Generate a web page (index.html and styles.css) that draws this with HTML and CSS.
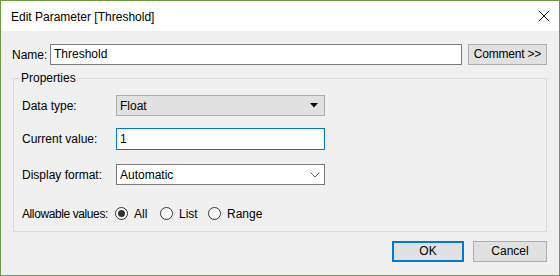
FILE: index.html
```html
<!DOCTYPE html>
<html>
<head>
<meta charset="utf-8">
<link rel="stylesheet" href="styles.css">
</head>
<body>
<div class="window">
  <div class="titlebar">
    <span class="title">Edit Parameter [Threshold]</span>
    <svg class="close" width="12" height="12" viewBox="0 0 12 12"><path d="M1 1 L11 11 M11 1 L1 11" stroke="#111" stroke-width="1" fill="none"/></svg>
  </div>
  <div class="content">
    <div class="name-row">
      <span class="name-label">Name:</span>
      <div class="textbox name-input">Threshold</div>
      <div class="btn comment">Comment &gt;&gt;</div>
    </div>
    <div class="group">
      <span class="legend">Properties</span>
      <div class="row row-type">
        <span class="lbl">Data type:</span>
        <div class="dropdown">
          <span>Float</span>
          <svg class="tri" width="8" height="5" viewBox="0 0 8 5"><path d="M0 0 H8 L4 4.5 Z" fill="#000"/></svg>
        </div>
      </div>
      <div class="row row-value">
        <span class="lbl">Current value:</span>
        <div class="textbox focus">1</div>
      </div>
      <div class="row row-format">
        <span class="lbl">Display format:</span>
        <div class="combo">
          <span>Automatic</span>
          <svg class="chev" width="10" height="6" viewBox="0 0 10 6"><path d="M0.5 0.5 L5 5 L9.5 0.5" stroke="#606060" stroke-width="1" fill="none"/></svg>
        </div>
      </div>
      <div class="row row-allow">
        <span class="lbl lbl-tight">Allowable values:</span>
        <div class="radios">
          <span class="opt opt-all"><span class="radio checked"></span><span class="rtext">All</span></span>
          <span class="opt opt-list"><span class="radio"></span><span class="rtext">List</span></span>
          <span class="opt"><span class="radio"></span><span class="rtext">Range</span></span>
        </div>
      </div>
    </div>
    <div class="footer">
      <div class="btn ok">OK</div>
      <div class="btn cancel">Cancel</div>
    </div>
  </div>
</div>
</body>
</html>
```
FILE: styles.css
```css
* { box-sizing: border-box; }
html, body { margin: 0; padding: 0; }
body {
  font-family: "Liberation Sans", Arial, sans-serif;
  font-size: 12px;
  color: #000;
  background: #f0f0f0;
}
.window {
  width: 560px;
  height: 276px;
  border: 1px solid #6f9a3f;
  background: #f0f0f0;
  display: flex;
  flex-direction: column;
  white-space: nowrap;
}
.titlebar {
  height: 30px;
  background: #fff;
  display: flex;
  align-items: center;
  justify-content: space-between;
  padding: 0 9px 0 10px;
  flex: none;
}
.title {
  font-size: 12px;
  line-height: 16px;
  margin-top: 1px;
}
.close { display: block; margin-top: -1px; }
.content {
  padding: 13px 12px 0 12px;
  display: flex;
  flex-direction: column;
}
.name-row {
  display: flex;
  align-items: center;
  height: 21px;
}
.name-label {
  flex: 0 0 38px;
  margin-left: -1px;
  line-height: 16px;
}
.textbox {
  height: 21px;
  border: 1px solid #7a7a7a;
  background: #fff;
  padding: 0 3px;
  line-height: 19px;
}
.name-input { width: 412px; }
.btn {
  height: 21px;
  background: #e1e1e1;
  border: 1px solid #adadad;
  text-align: center;
  line-height: 19px;
}
.comment {
  width: 79px;
  margin-left: 6px;
  letter-spacing: -0.2px;
}
.group {
  position: relative;
  margin-top: 13px;
  height: 154px;
  border: 1px solid #dcdcdc;
  padding: 16px 0 0 8px;
}
.legend {
  position: absolute;
  left: 5px;
  top: -9px;
  padding: 0 2px;
  background: #f0f0f0;
  line-height: 16px;
}
.row {
  display: flex;
  align-items: center;
}
.lbl {
  flex: 0 0 94px;
  min-width: 0;
  line-height: 16px;
}
.lbl-tight { letter-spacing: -0.4px; }
.row-value { margin-top: 12px; }
.row-value .textbox { width: 209px; height: 22px; line-height: 20px; }
.row-format { margin-top: 14px; }
.row-allow { margin-top: 22px; height: 13px; }
.dropdown, .combo {
  width: 209px;
  height: 21px;
  display: flex;
  align-items: center;
  justify-content: space-between;
  padding: 0 6px 0 3px;
}
.dropdown {
  background: #e1e1e1;
  border: 1px solid #adadad;
}
.combo {
  background: #fff;
  border: 1px solid #7a7a7a;
  padding-right: 4px;
}
.tri, .chev { display: block; }
.textbox.focus { border-color: #0078d7; }
.radios {
  display: flex;
  align-items: center;
  margin-left: -1px;
}
.opt {
  display: flex;
  align-items: center;
}
.opt-all { width: 45px; }
.opt-list { width: 48px; }
.radio {
  flex: none;
  width: 13px;
  height: 13px;
  border: 1px solid #333;
  border-radius: 50%;
  background: #fff;
  display: flex;
  align-items: center;
  justify-content: center;
}
.radio.checked::after {
  content: "";
  width: 7px;
  height: 7px;
  border-radius: 50%;
  background: #333;
}
.rtext {
  margin-left: 6px;
  line-height: 16px;
}
.footer {
  display: flex;
  justify-content: flex-end;
  margin-top: 9px;
}
.ok {
  width: 72px;
  border: 2px solid #0078d7;
  line-height: 17px;
}
.cancel {
  width: 74px;
  margin-left: 9px;
}
```
